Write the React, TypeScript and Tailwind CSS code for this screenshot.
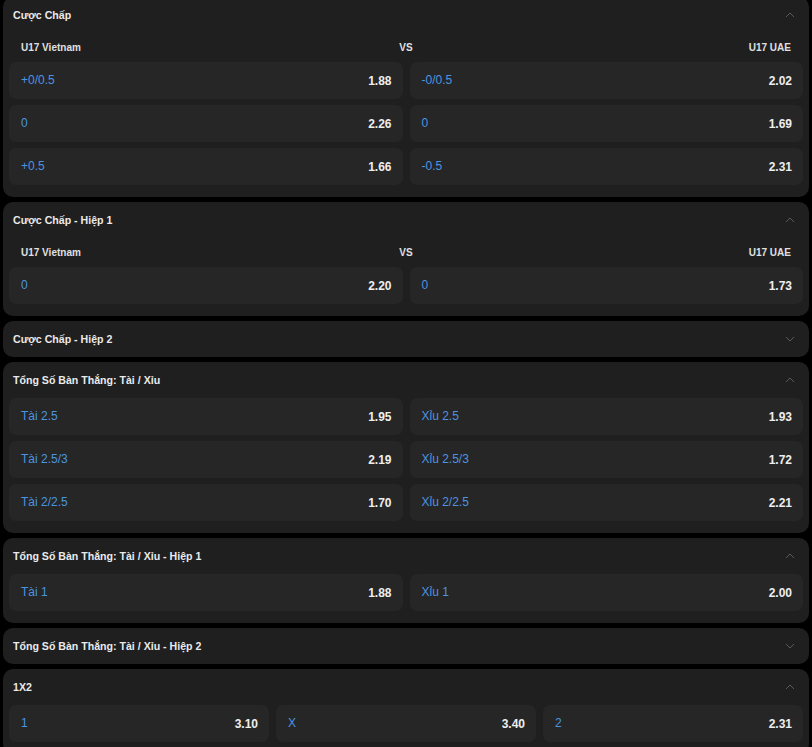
import React from "react";

type Cell = { label: string; value: string };

const Chevron = ({ up }: { up: boolean }) => (
  <svg width="10" height="6" viewBox="0 0 10 6" className="shrink-0">
    {up ? (
      <path d="M1 5 L5 1 L9 5" fill="none" stroke="#5a5a5a" strokeWidth="1" />
    ) : (
      <path d="M1 1 L5 5 L9 1" fill="none" stroke="#5a5a5a" strokeWidth="1" />
    )}
  </svg>
);

const OddCell = ({ c }: { c: Cell }) => (
  <div className="h-[37px] rounded-[7px] bg-[#262626] flex items-center justify-between pl-3 pr-[11px]">
    <span className="text-[12px] text-[#4b95e0] -mt-[1px]">{c.label}</span>
    <span className="text-[12px] font-bold text-[#eeeeee]">{c.value}</span>
  </div>
);

const Card = ({
  title,
  open,
  teams,
  cols = 2,
  rows = [],
}: {
  title: string;
  open: boolean;
  teams?: boolean;
  cols?: number;
  rows?: Cell[][];
}) => (
  <div className="bg-[#1f1f1f] rounded-[10px] mx-[3px]">
    <div className="h-[36px] flex items-center justify-between pl-[10px] pr-[14px]">
      <span className="text-[10.6px] font-bold text-[#eaeaea] mt-[2px]">{title}</span>
      <Chevron up={open} />
    </div>
    {open && (
      <div className="px-[6px] pb-[12px]">
        {teams && (
          <div className="h-[29px] grid grid-cols-3 items-center px-3 text-[10px] font-bold text-[#e0e0e0]">
            <span>U17 Vietnam</span>
            <span className="text-center">VS</span>
            <span className="text-right">U17 UAE</span>
          </div>
        )}
        <div className="flex flex-col gap-[6px]">
          {rows.map((r, i) => (
            <div
              key={i}
              className={cols === 3 ? "grid grid-cols-3 gap-[7px]" : "grid grid-cols-2 gap-[7px]"}
            >
              {r.map((c, j) => (
                <OddCell key={j} c={c} />
              ))}
            </div>
          ))}
        </div>
      </div>
    )}
  </div>
);

export default function App() {
  return (
    <div
      className="min-h-[747px] bg-black overflow-hidden"
      style={{ fontFamily: '"Liberation Sans", Arial, sans-serif' }}
    >
      <div className="-mt-[3px] flex flex-col gap-[5px]">
        <Card
          title="Cược Chấp"
          open
          teams
          rows={[
            [
              { label: "+0/0.5", value: "1.88" },
              { label: "-0/0.5", value: "2.02" },
            ],
            [
              { label: "0", value: "2.26" },
              { label: "0", value: "1.69" },
            ],
            [
              { label: "+0.5", value: "1.66" },
              { label: "-0.5", value: "2.31" },
            ],
          ]}
        />
        <Card
          title="Cược Chấp - Hiệp 1"
          open
          teams
          rows={[
            [
              { label: "0", value: "2.20" },
              { label: "0", value: "1.73" },
            ],
          ]}
        />
        <Card title="Cược Chấp - Hiệp 2" open={false} />
        <Card
          title="Tổng Số Bàn Thắng: Tài / Xỉu"
          open
          rows={[
            [
              { label: "Tài 2.5", value: "1.95" },
              { label: "Xỉu 2.5", value: "1.93" },
            ],
            [
              { label: "Tài 2.5/3", value: "2.19" },
              { label: "Xỉu 2.5/3", value: "1.72" },
            ],
            [
              { label: "Tài 2/2.5", value: "1.70" },
              { label: "Xỉu 2/2.5", value: "2.21" },
            ],
          ]}
        />
        <Card
          title="Tổng Số Bàn Thắng: Tài / Xỉu - Hiệp 1"
          open
          rows={[
            [
              { label: "Tài 1", value: "1.88" },
              { label: "Xỉu 1", value: "2.00" },
            ],
          ]}
        />
        <Card title="Tổng Số Bàn Thắng: Tài / Xỉu - Hiệp 2" open={false} />
        <Card
          title="1X2"
          open
          cols={3}
          rows={[
            [
              { label: "1", value: "3.10" },
              { label: "X", value: "3.40" },
              { label: "2", value: "2.31" },
            ],
          ]}
        />
      </div>
    </div>
  );
}
